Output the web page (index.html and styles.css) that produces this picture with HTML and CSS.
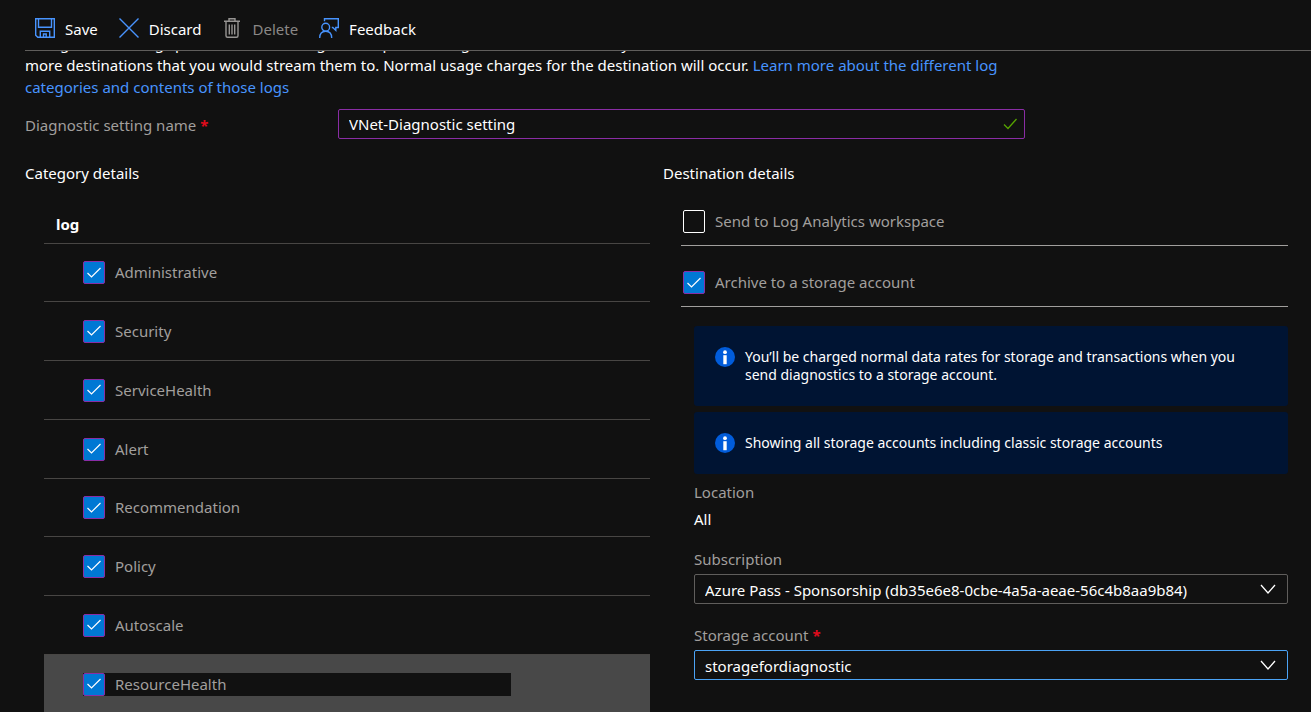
FILE: index.html
```html
<!DOCTYPE html>
<html lang="en">
<head>
<meta charset="utf-8">
<title>Diagnostic setting</title>
<link rel="stylesheet" href="styles.css">
</head>
<body>
<header class="toolbar">
  <button class="command" type="button">
    <svg class="icon" viewBox="0 0 20 20" fill="none" stroke="currentColor" stroke-width="1.4"><path d="M.7.7h18.6v18.6H2.8L.7 17.200zM3.500.7v8.600h13V.7M5.300 19.300v-6.100h9.400v6.100M8.500 19v-3h2.700v3"/></svg>
    <span>Save</span>
  </button>
  <button class="command" type="button">
    <svg class="icon" viewBox="0 0 20 20" fill="none" stroke="currentColor" stroke-width="1.400"><path d="M.5.5l19 19M19.500.5l-19 19"/></svg>
    <span>Discard</span>
  </button>
  <button class="command" type="button" disabled>
    <svg class="icon" viewBox="0 0 20 20" fill="none" stroke="currentColor" stroke-width="1.400"><path d="M2 3.300h16M7 3V.8h6V3M4 3.500v14.300q0 1.500 1.500 1.500h9q1.500 0 1.500-1.500V3.500M7.300 6.500v10M10 6.500v10M12.700 6.500v10"/></svg>
    <span>Delete</span>
  </button>
  <button class="command" type="button">
    <svg class="icon" viewBox="0 0 20 20" fill="none" stroke="currentColor" stroke-width="1.400"><circle cx="6.700" cy="9.200" r="3.900"/><path d="M.7 20q0-6.800 6-6.800t6 6.800M5.500 3.300V.7h13.800v8.800h-2.500v2.900l-3-2.900h-1"/></svg>
    <span>Feedback</span>
  </button>
</header>
<main class="content">
  <p class="intro">A diagnostic setting specifies a list of categories of platform logs and/or metrics that you want to collect from a resource, and one or<br>more destinations that you would stream them to. Normal usage charges for the destination will occur. <a href="#">Learn more about the different log categories and contents of those logs</a></p>
  <div class="name-row">
    <label for="name">Diagnostic setting name <span class="required">*</span></label>
    <input class="field field-valid" id="name" type="text" value="VNet-Diagnostic setting">
  </div>
  <div class="columns">
    <section>
      <h2 class="heading">Category details</h2>
      <div class="category">
        <h3 class="category-title">log</h3>
        <ul class="category-list">
          <li><label class="option"><input class="check" type="checkbox" checked>Administrative</label></li>
          <li><label class="option"><input class="check" type="checkbox" checked>Security</label></li>
          <li><label class="option"><input class="check" type="checkbox" checked>ServiceHealth</label></li>
          <li><label class="option"><input class="check" type="checkbox" checked>Alert</label></li>
          <li><label class="option"><input class="check" type="checkbox" checked>Recommendation</label></li>
          <li><label class="option"><input class="check" type="checkbox" checked>Policy</label></li>
          <li><label class="option"><input class="check" type="checkbox" checked>Autoscale</label></li>
          <li class="active"><label class="option"><input class="check" type="checkbox" checked>ResourceHealth</label></li>
        </ul>
      </div>
    </section>
    <section>
      <h2 class="heading">Destination details</h2>
      <div class="destinations">
        <div class="destination"><label class="option"><input class="check" type="checkbox">Send to Log Analytics workspace</label></div>
        <div class="destination"><label class="option"><input class="check" type="checkbox" checked>Archive to a storage account</label></div>
        <div class="storage">
          <div class="banner">
            <svg class="info" viewBox="0 0 20 20"><circle cx="10" cy="10" r="10" fill="#015cda"/><circle cx="10" cy="5.200" r="1.900" fill="#fff"/><path d="M8.300 8.200h3.400v9H8.300z" fill="#fff"/></svg>
            <p>You’ll be charged normal data rates for storage and transactions when you send diagnostics to a storage account.</p>
          </div>
          <div class="banner">
            <svg class="info" viewBox="0 0 20 20"><circle cx="10" cy="10" r="10" fill="#015cda"/><circle cx="10" cy="5.200" r="1.900" fill="#fff"/><path d="M8.300 8.200h3.400v9H8.300z" fill="#fff"/></svg>
            <p>Showing all storage accounts including classic storage accounts</p>
          </div>
          <dl class="location"><dt>Location</dt><dd>All</dd></dl>
          <div class="group">
            <label for="subscription">Subscription</label>
            <select class="field" id="subscription"><option>Azure Pass - Sponsorship (db35e6e8-0cbe-4a5a-aeae-56c4b8aa9b84)</option></select>
          </div>
          <div class="group">
            <label for="account">Storage account <span class="required">*</span></label>
            <select class="field field-focus" id="account"><option>storagefordiagnostic</option></select>
          </div>
        </div>
      </div>
    </section>
  </div>
</main>
</body>
</html>
```
FILE: styles.css
```css
* {
  box-sizing: border-box;
}

body {
  display: flex;
  flex-direction: column;
  margin: 0;
  height: 100vh;
  background: #111;
  color: #fff;
  font: 15px/22px "Segoe UI", "Noto Sans", sans-serif;
}

h2, h3, p, ul, dl, dd {
  margin: 0;
  padding: 0;
}

.toolbar {
  display: flex;
  flex: none;
  gap: 21px;
  margin-left: 25px;
  padding: 18px 10px 10px;
  border-bottom: 1px solid #605e5c;
}

.command {
  display: flex;
  align-items: flex-start;
  gap: 10px;
  padding: 0;
  border: 0;
  background: none;
  color: #fff;
  font: inherit;
}

.command:disabled {
  color: #8a8886;
}

.icon {
  width: 20px;
  height: 20px;
  color: #4894fe;
}

.command:disabled .icon {
  color: #979593;
}

.content {
  flex: 1;
  min-height: 0;
  overflow: hidden;
  padding: 0 23px 0 25px;
}

/* Scrolled so the first line sits partly above the content area. */
.intro {
  max-width: 1000px;
  margin-top: -19px;
}

a {
  color: #4894fe;
  text-decoration: none;
}

.name-row {
  display: grid;
  grid-template-columns: 313px 1fr;
  align-items: center;
  max-width: 1000px;
  margin-top: 11px;
}

.name-row label {
  padding-top: 2px;
}

label, dt {
  color: #a19f9d;
}

.required {
  color: #e00b1c;
  font-weight: 700;
}

.field {
  width: 100%;
  height: 30px;
  padding: 0 10px;
  appearance: none;
  border: 1px solid #605e5c;
  border-radius: 2px;
  background: #111 no-repeat right 10px center;
  color: #fff;
  font: inherit;
}

select.field {
  padding-top: 2px;
  background-image: url("data:image/svg+xml,%3Csvg xmlns='http://www.w3.org/2000/svg' width='18' height='10' fill='none' stroke='white' stroke-width='1.3'%3E%3Cpath d='M2 1l7 8 7-8'/%3E%3C/svg%3E");
}

.field-valid {
  border-color: #8a2da5;
  background-position: right 6px center;
  background-image: url("data:image/svg+xml,%3Csvg xmlns='http://www.w3.org/2000/svg' width='16' height='12' fill='none' stroke='%2357a300' stroke-width='1.3'%3E%3Cpath d='M2 6.500l4 4L14.500 1'/%3E%3C/svg%3E");
}

.field-focus {
  border-color: #4ba3f5;
}

.columns {
  display: grid;
  grid-template-columns: 1fr 1fr;
  gap: 13px;
  margin-top: 23px;
}

.heading {
  font-size: 15px;
  font-weight: 400;
}

.category {
  padding: 29px 0 0 19px;
}

.category-title {
  padding: 0 12px 8px;
  border-bottom: 1px solid #484644;
  font-size: 15px;
  font-weight: 700;
}

.category-list {
  list-style: none;
}

.category-list li {
  display: flex;
  align-items: center;
  height: 59px;
  padding-left: 39px;
  border-bottom: 1px solid #484644;
}

.category-list li:nth-child(4n + 1) {
  height: 58px;
}

.option {
  display: flex;
  align-items: flex-start;
  gap: 10px;
}

.category-list .active {
  border-color: #484848;
  background: #484848;
}

.active .option {
  width: 428px;
  background: #111;
}

.check {
  flex: none;
  width: 22px;
  height: 23px;
  margin: 0;
  appearance: none;
  border: 1px solid #fff;
  border-radius: 2px;
}

.check:checked {
  border-color: #8a2da5;
  background: #0078d4 no-repeat center;
  background-image: url("data:image/svg+xml,%3Csvg xmlns='http://www.w3.org/2000/svg' width='16' height='12' fill='none' stroke='white' stroke-width='1.2'%3E%3Cpath d='M1.500 6l4 4L14.500 1'/%3E%3C/svg%3E");
}

.destinations {
  padding: 26px 0 0 18px;
}

.destination {
  padding: 0 2px 12px;
  border-bottom: 1px solid #a19f9d;
}

.destination + .destination {
  padding-top: 25px;
}

.storage {
  padding: 19px 0 0 13px;
}

.banner {
  display: flex;
  gap: 10px;
  margin-bottom: 6px;
  padding: 21px 40px 21px 21px;
  border-radius: 3px;
  background: #001433;
  font-size: 14px;
  line-height: 18px;
}

.banner p {
  padding: 1px 0;
}

.info {
  flex: none;
  width: 20px;
  height: 20px;
}

.location {
  margin-top: 7px;
}

.location dd {
  margin-top: 5px;
}

.group {
  margin-top: 18px;
}

.group + .group {
  margin-top: 20px;
}

.group label {
  display: block;
  margin-bottom: 4px;
}
```
